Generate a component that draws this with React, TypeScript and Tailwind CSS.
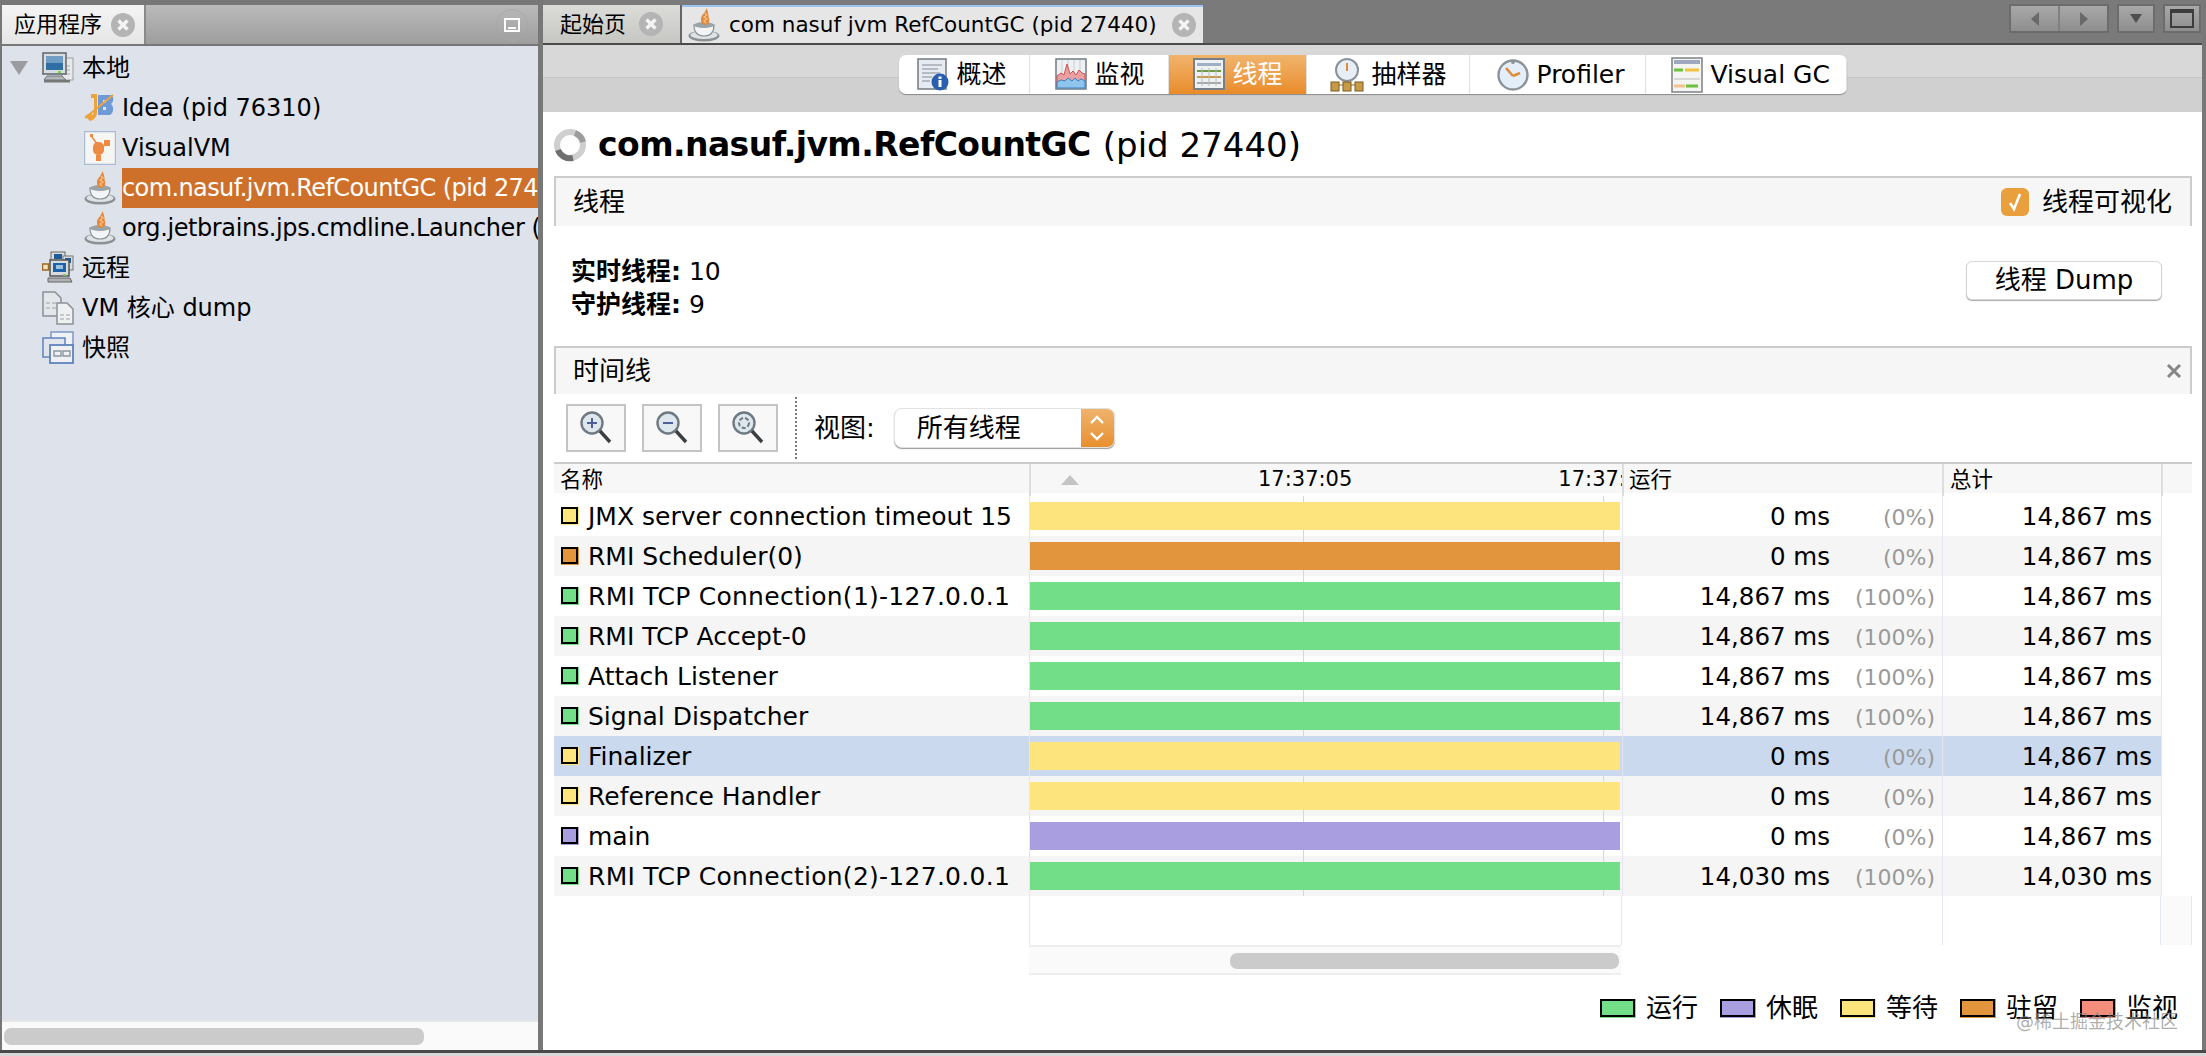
const threads = [
  { name: "JMX server connection timeout 15", color: "bg-[#fde47c]", run: "0 ms", pct: "(0%)", total: "14,867 ms", tracking: "" },
  { name: "RMI Scheduler(0)", color: "bg-[#e2953c]", run: "0 ms", pct: "(0%)", total: "14,867 ms", tracking: "" },
  { name: "RMI TCP Connection(1)-127.0.0.1", color: "bg-[#72df88]", run: "14,867 ms", pct: "(100%)", total: "14,867 ms", tracking: "tracking-[0.27px]" },
  { name: "RMI TCP Accept-0", color: "bg-[#72df88]", run: "14,867 ms", pct: "(100%)", total: "14,867 ms", tracking: "" },
  { name: "Attach Listener", color: "bg-[#72df88]", run: "14,867 ms", pct: "(100%)", total: "14,867 ms", tracking: "" },
  { name: "Signal Dispatcher", color: "bg-[#72df88]", run: "14,867 ms", pct: "(100%)", total: "14,867 ms", tracking: "" },
  { name: "Finalizer", color: "bg-[#fde47c]", run: "0 ms", pct: "(0%)", total: "14,867 ms", tracking: "" },
  { name: "Reference Handler", color: "bg-[#fde47c]", run: "0 ms", pct: "(0%)", total: "14,867 ms", tracking: "" },
  { name: "main", color: "bg-[#a99fe0]", run: "0 ms", pct: "(0%)", total: "14,867 ms", tracking: "" },
  { name: "RMI TCP Connection(2)-127.0.0.1", color: "bg-[#72df88]", run: "14,030 ms", pct: "(100%)", total: "14,030 ms", tracking: "tracking-[0.27px]" },
];

const legend = [
  { label: "运行", color: "bg-[#72df88]" },
  { label: "休眠", color: "bg-[#a99fe0]" },
  { label: "等待", color: "bg-[#fde47c]" },
  { label: "驻留", color: "bg-[#e2953c]" },
  { label: "监视", color: "bg-[#f48d7c]" },
];

function CloseDot() {
  return (
    <svg width="26" height="26" viewBox="0 0 26 26" className="shrink-0">
      <circle cx="13" cy="13" r="12" fill="#b4b4b4" />
      <path d="M8.5 8.5l9 9M17.5 8.5l-9 9" stroke="#f4f4f4" strokeWidth="3.4" />
    </svg>
  );
}

function JavaCup() {
  return (
    <svg width="32" height="36" viewBox="0 0 32 36" className="shrink-0">
      <ellipse cx="16" cy="29" rx="15.5" ry="5.5" fill="#8b9296" />
      <ellipse cx="16" cy="28" rx="13.5" ry="4" fill="#dfe3e6" />
      <path d="M6 18c0 8 4 11 10 11s10-3 10-11c-4 2-16 2-20 0z" fill="#f2f4f5" stroke="#8b949a" strokeWidth="1.2" />
      <ellipse cx="16" cy="18" rx="10" ry="3" fill="#9aa3a8" />
      <path d="M18 1c1 4-6 7-5 12 0 3 2 5 4 5 4-1 5-4 4-7-1-2 0-3-1-5 0-2-1-4-2-5z" fill="#e28a3c" />
      <path d="M17 6l2 2-3 2 3 2-3 2 2 2" stroke="#f7c08d" strokeWidth="1.2" fill="none" />
    </svg>
  );
}

function ComputerIcon() {
  return (
    <svg width="32" height="32" viewBox="0 0 32 32" className="shrink-0">
      <rect x="20" y="6" width="11" height="22" fill="#e6e8ea" stroke="#9aa0a5" />
      <path d="M23 14h5M23 18h5M23 22h5" stroke="#a8acb0" />
      <rect x="1" y="1" width="23" height="21" fill="#d9dcdf" stroke="#5e6469" strokeWidth="1.5" />
      <rect x="4" y="4" width="17" height="14" fill="#2f6fa3" />
      <rect x="4" y="4" width="17" height="7" fill="#6f9dc4" />
      <rect x="16" y="19" width="3" height="2" fill="#75d04a" />
      <path d="M5 24h15l4 4H2z" fill="#b4b8bb" stroke="#6e7478" />
      <rect x="2" y="28" width="26" height="2.5" fill="#777" />
    </svg>
  );
}

function RemoteIcon() {
  return (
    <svg width="32" height="34" viewBox="0 0 32 34" className="shrink-0">
      <rect x="9" y="1" width="14" height="10" fill="#d9dcdf" stroke="#666" />
      <rect x="12" y="3" width="8" height="5" fill="#1d5a99" />
      <rect x="21" y="5" width="10" height="14" fill="#d9dcdf" stroke="#777" />
      <rect x="23" y="7" width="6" height="5" fill="#1d5a99" />
      <rect x="0.5" y="13" width="6" height="6" fill="#f3e3bd" stroke="#9a6a2a" strokeWidth="1.5" />
      <rect x="8" y="9" width="19" height="16" fill="#d9dcdf" stroke="#555" strokeWidth="1.5" />
      <rect x="11" y="12" width="13" height="9" fill="#1d62a8" />
      <rect x="14" y="14" width="7" height="4" fill="#9cc0e0" />
      <path d="M6 27h22l2 4H6z" fill="#aeb2b5" stroke="#666" />
      <rect x="21" y="23" width="3" height="2" fill="#75d04a" />
    </svg>
  );
}

function DumpIcon() {
  return (
    <svg width="32" height="34" viewBox="0 0 32 34" className="shrink-0">
      <path d="M1 1h12l6 6v18H1z" fill="#e4e7ea" stroke="#8c9196" strokeWidth="1.5" />
      <path d="M4 12h4M10 12h4M4 17h4M10 17h4" stroke="#9da2a6" />
      <path d="M15 12h10l6 6v15H15z" fill="#eef0f2" stroke="#8c9196" strokeWidth="1.5" />
      <path d="M18 24h4M24 24h4M18 28h4M24 28h4" stroke="#9da2a6" />
    </svg>
  );
}

function SnapshotIcon() {
  return (
    <svg width="32" height="34" viewBox="0 0 32 34" className="shrink-0">
      <rect x="9" y="1" width="22" height="17" fill="#eef1f5" stroke="#7f97c2" strokeWidth="1.5" />
      <rect x="1" y="7" width="22" height="19" fill="#e2e6ec" stroke="#5f83bd" strokeWidth="1.5" />
      <rect x="8" y="14" width="23" height="18" fill="#eef0f3" stroke="#5f83bd" strokeWidth="1.8" />
      <path d="M12 20h7v5h-7zM21 20h7v5h-7z" fill="none" stroke="#8e959d" strokeWidth="1.4" />
    </svg>
  );
}

function IdeaIcon() {
  return (
    <svg width="32" height="32" viewBox="0 0 32 32" className="shrink-0">
      <path d="M14 3h13c3 1 3 7 0 9 3 2 3 9-1 11H14z" fill="#6f9ad8" />
      <path d="M19 8h3v3h-3zM19 15h3v3h-3z" fill="#dee2ea" />
      <path d="M7 2h6v18c0 5-3 8-7 9l-5-5 5-3 3 2 1-6V6H7z" fill="#eda33a" />
      <path d="M1 26L29 3" stroke="#eda33a" strokeWidth="2" />
    </svg>
  );
}

function VisualVmIcon() {
  return (
    <svg width="32" height="34" viewBox="0 0 32 34" className="shrink-0">
      <rect x="0.5" y="0.5" width="31" height="33" rx="1" fill="#f5f5f3" stroke="#a7bcd4" strokeWidth="1.4" />
      <rect x="9" y="11" width="11" height="13" rx="5" fill="#ee8a44" />
      <rect x="20" y="9" width="6" height="6" fill="#ee8a44" />
      <rect x="12" y="24" width="5" height="6" fill="#ee8a44" />
      <rect x="6" y="3" width="3" height="3" fill="#ee8a44" />
      <path d="M8 6l5 7M24 12l-7 5" stroke="#ee8a44" strokeWidth="1.5" />
    </svg>
  );
}

function OverviewIcon() {
  return (
    <svg width="32" height="33" viewBox="0 0 32 33" className="shrink-0">
      <rect x="1" y="1" width="28" height="30" fill="#e6ebf1" stroke="#7b8288" strokeWidth="1.6" />
      <path d="M5 7h20M5 11h16M5 15h18M5 19h10M5 23h8" stroke="#a5acb3" strokeWidth="1.3" />
      <circle cx="23" cy="24" r="8.5" fill="#2a5fb0" />
      <rect x="21.5" y="22" width="3" height="7" fill="#fff" />
      <rect x="21.5" y="18.5" width="3" height="2.4" fill="#fff" />
    </svg>
  );
}

function MonitorIcon() {
  return (
    <svg width="32" height="33" viewBox="0 0 32 33" className="shrink-0">
      <rect x="1" y="1" width="30" height="30" fill="#eef0f3" stroke="#7b8288" strokeWidth="1.6" />
      <path d="M7 2v28M13 2v28M19 2v28M25 2v28" stroke="#c9ced3" />
      <path d="M2 18l4-3 3 2 3-11 3 10 3-3 3 4 3-5 3 3 3 1v13H2z" fill="#eba1a1" stroke="#cf5050" />
      <path d="M2 24l4-2 4 1 3-3 4 3 3-3 3 3 3-2 4 2v7H2z" fill="#8fc4ec" stroke="#3a83c4" />
    </svg>
  );
}

function ThreadsIcon() {
  return (
    <svg width="32" height="33" viewBox="0 0 32 33" className="shrink-0">
      <rect x="1" y="1" width="30" height="30" fill="#eef1f2" stroke="#77808a" strokeWidth="2" />
      <rect x="4" y="5" width="24" height="3" fill="#9fb0c6" />
      <path d="M4 13h24" stroke="#6f9a44" strokeWidth="2" />
      <path d="M4 19h24" stroke="#c79a4a" strokeWidth="2" />
      <path d="M4 25h24" stroke="#a8a8a8" strokeWidth="2" />
      <path d="M9 10v18M16 10v18M23 10v18" stroke="#b8bcc0" />
    </svg>
  );
}

function SamplerIcon() {
  return (
    <svg width="34" height="34" viewBox="0 0 34 34" className="shrink-0">
      <circle cx="17" cy="12" r="11" fill="#e8eef5" stroke="#8a9199" strokeWidth="2" />
      <path d="M17 5v8" stroke="#e08a3c" strokeWidth="2" />
      <path d="M2 27h30" stroke="#8a6a2c" />
      <rect x="1" y="24" width="8" height="9" fill="#c99a45" stroke="#7a5a20" />
      <rect x="13" y="24" width="8" height="9" fill="#c99a45" stroke="#7a5a20" />
      <rect x="25" y="24" width="8" height="9" fill="#c99a45" stroke="#7a5a20" />
    </svg>
  );
}

function ProfilerIcon() {
  return (
    <svg width="32" height="34" viewBox="0 0 32 34" className="shrink-0">
      <circle cx="16" cy="17" r="14.5" fill="#e4eef8" stroke="#8b9298" strokeWidth="2.4" />
      <path d="M16 18l-7-8M16 18l7-3" stroke="#e08a3c" strokeWidth="2.6" />
      <circle cx="16" cy="4" r="2" fill="#8b9298" />
    </svg>
  );
}

function VisualGcIcon() {
  return (
    <svg width="32" height="36" viewBox="0 0 32 36" className="shrink-0">
      <rect x="1" y="1" width="30" height="34" fill="#f4f5f2" stroke="#85898d" strokeWidth="1.6" />
      <rect x="3" y="3" width="26" height="4" fill="#9fa8c0" />
      <path d="M3 13h9" stroke="#6cc23d" strokeWidth="3" />
      <path d="M14 13h14" stroke="#f0c442" strokeWidth="3" />
      <path d="M3 22h26" stroke="#d6d8d4" strokeWidth="2" />
      <path d="M3 29h11" stroke="#f2c28f" strokeWidth="3" />
      <path d="M15 29h12" stroke="#6cc23d" strokeWidth="3" />
    </svg>
  );
}

function Magnifier({ kind }: { kind: "plus" | "minus" | "fit" }) {
  return (
    <svg width="34" height="36" viewBox="0 0 34 36">
      <circle cx="13" cy="13" r="10.5" fill="#dfe7ee" stroke="#6e7a82" strokeWidth="2.4" />
      <path d="M21 21l10 11" stroke="#3b3f42" strokeWidth="3.4" />
      {kind === "plus" && <path d="M8 13h10M13 8v10" stroke="#4e5f9c" strokeWidth="2" />}
      {kind === "minus" && <path d="M8 13h10" stroke="#4e5f9c" strokeWidth="2" />}
      {kind === "fit" && <circle cx="13" cy="13" r="5" fill="none" stroke="#6e7a82" strokeWidth="2" strokeDasharray="4 2" />}
    </svg>
  );
}

function Swatch({ color, big }: { color: string; big?: boolean }) {
  return (
    <span className={`relative block shrink-0 ${color} ${big ? "w-[36px] h-[19px]" : "w-[18px] h-[18px]"}`}>
      <span className={`absolute left-0 top-0 border-2 border-black ${big ? "w-[35px] h-[18px]" : "w-[17px] h-[17px]"}`} />
    </span>
  );
}

function NavButton({ className, children }: { className: string; children: React.ReactNode }) {
  return (
    <div className={`h-[29px] flex items-center justify-center border-2 border-[#6c6c6c] bg-gradient-to-b from-[#a8a8a8] to-[#8e8e8e] ${className}`}>
      {children}
    </div>
  );
}

const segments = [
  { label: "概述", icon: <OverviewIcon />, w: "w-[131px] pl-[18px]", active: false },
  { label: "监视", icon: <MonitorIcon />, w: "w-[139px] pl-[25px]", active: false },
  { label: "线程", icon: <ThreadsIcon />, w: "w-[138px] pl-[24px]", active: true },
  { label: "抽样器", icon: <SamplerIcon />, w: "w-[163px] pl-[23px]", active: false },
  { label: "Profiler", icon: <ProfilerIcon />, w: "w-[176px] pl-[27px]", active: false },
  { label: "Visual GC", icon: <VisualGcIcon />, w: "w-[201px] pl-[25px]", active: false },
];

function TreeRow({ icon, label, selected, tracking = "" }: { icon: React.ReactNode; label: string; selected?: boolean; tracking?: string }) {
  return (
    <div className="h-10 flex items-center pl-[82px]">
      <span className="w-[38px] pr-[6px] flex justify-end shrink-0">{icon}</span>
      <span
        className={`h-10 flex-1 min-w-0 flex items-center whitespace-nowrap overflow-hidden ${tracking} ${
          selected ? "bg-[#cf702a] text-white" : "text-black"
        }`}
      >
        {label}
      </span>
    </div>
  );
}

export default function App() {
  return (
    <div className="w-[2206px] h-[1056px] overflow-hidden flex flex-col bg-[#777777] text-black font-['DejaVu_Sans','Noto_Sans_CJK_SC',sans-serif]">
      <div className="h-[1050px] flex pl-[2px] pr-[4px]">
        {/* left: applications tree */}
        <div className="w-[536px] flex flex-col pt-[5px]">
          <div className="h-[41px] flex items-stretch bg-gradient-to-b from-[#bababa] to-[#9e9e9e] border-b-2 border-[#777777]">
            <div className="w-[144px] bg-gradient-to-b from-[#f4f4f4] to-[#e6e6e6] flex items-center pl-[12px] gap-[8px] border-r-2 border-[#8a8a8a] text-[22px]">
              <span>应用程序</span>
              <CloseDot />
            </div>
            <div className="flex-1 flex items-center justify-end pr-[10px]">
              <div className="w-[32px] h-[32px] rounded-full border border-[#a8a8a8] flex items-center justify-center">
                <div className="w-[16px] h-[14px] border-2 border-white flex items-end justify-center pb-[1px]">
                  <div className="w-[8px] h-[2px] bg-white" />
                </div>
              </div>
            </div>
          </div>
          <div className="flex-1 bg-[#dee2ea] pt-[2px] text-[24px]">
            <div className="h-10 flex items-center pl-[7px]">
              <svg width="20" height="16" viewBox="0 0 20 16" className="mr-[13px] shrink-0">
                <path d="M1 1h18l-9 14z" fill="#9a9ca0" />
              </svg>
              <ComputerIcon />
              <span className="ml-[8px]">本地</span>
            </div>
            <TreeRow icon={<IdeaIcon />} label="Idea (pid 76310)" />
            <TreeRow icon={<VisualVmIcon />} label="VisualVM" />
            <TreeRow icon={<JavaCup />} label="com.nasuf.jvm.RefCountGC (pid 27440)" selected tracking="tracking-[-0.6px]" />
            <TreeRow icon={<JavaCup />} label="org.jetbrains.jps.cmdline.Launcher (pid 76311)" tracking="tracking-[-0.4px]" />
            <div className="h-10 flex items-center pl-[40px] gap-[8px]">
              <RemoteIcon />
              <span>远程</span>
            </div>
            <div className="h-10 flex items-center pl-[40px] gap-[8px]">
              <DumpIcon />
              <span>VM 核心 dump</span>
            </div>
            <div className="h-10 flex items-center pl-[40px] gap-[8px]">
              <SnapshotIcon />
              <span>快照</span>
            </div>
          </div>
          <div className="h-[30px] bg-[#fafafa] border-t-2 border-[#e6e6e6] pt-[6px] pl-[2px]">
            <div className="w-[420px] h-[17px] rounded-[7px] bg-[#cbcbcb]" />
          </div>
        </div>

        <div className="w-[5px] shrink-0" />

        {/* right: application view */}
        <div className="flex-1 min-w-0 flex flex-col">
          <div className="h-[45px] pt-[5px] flex border-b-2 border-[#4a4a4a] bg-[#7a7a7a]">
            <div className="w-[139px] h-[38px] flex items-center pl-[17px] gap-[12px] border-r-2 border-[#666] bg-gradient-to-b from-[#dcdcd8] to-[#c6c6c2] text-[22px]">
              <span>起始页</span>
              <CloseDot />
            </div>
            <div className="w-[521px] h-[38px] flex flex-col">
              <div className="h-[3px] bg-[#9dc3f2]" />
              <div className="flex-1 flex items-center pl-[6px] bg-[#e6e6e6] text-[21.5px] whitespace-nowrap">
                <JavaCup />
                <span className="ml-[9px]">com nasuf jvm RefCountGC (pid 27440)</span>
                <span className="ml-[14px]">
                  <CloseDot />
                </span>
              </div>
            </div>
            <div className="flex-1 flex justify-end gap-[8px] pr-[1px] -mt-[1px]">
              <NavButton className="w-[100px] gap-0">
                <span className="flex-1 h-full flex items-center justify-center border-r-2 border-[#808080]">
                  <svg width="10" height="14" viewBox="0 0 10 14"><path d="M9 0v14L1 7z" fill="#696969" /></svg>
                </span>
                <span className="flex-1 h-full flex items-center justify-center">
                  <svg width="10" height="14" viewBox="0 0 10 14"><path d="M1 0v14l8-7z" fill="#696969" /></svg>
                </span>
              </NavButton>
              <NavButton className="w-[38px]">
                <svg width="12" height="9" viewBox="0 0 12 9"><path d="M0 0h12L6 9z" fill="#4f4f4f" /></svg>
              </NavButton>
              <NavButton className="w-[38px]">
                <div className="w-[24px] h-[19px] border-2 border-t-[4px] border-[#3c3c3c]" />
              </NavButton>
            </div>
          </div>

          <div className="relative h-[67px] bg-[#d0d0d0] pt-[10px] flex justify-center">
            <div className="absolute left-0 right-0 top-0 h-[33px] bg-[#d8d8d8] border-b border-[#c6c6c6]" />
            <div className="relative h-[39px] flex rounded-[7px] overflow-hidden bg-white shadow-[0_1px_1px_#8a8a8a] text-[25px]">
              {segments.map((s) => (
                <div
                  key={s.label}
                  className={`${s.w} flex items-center gap-[8px] border-r border-[#e0e0e0] whitespace-nowrap ${
                    s.active ? "bg-gradient-to-b from-[#f0b46b] to-[#e98c26] text-white" : "text-black"
                  }`}
                >
                  {s.icon}
                  <span>{s.label}</span>
                </div>
              ))}
            </div>
          </div>

          <div className="relative flex-1 bg-white">
            <div className="h-[64px] flex items-center pl-[10px] pt-[2px]">
              <svg width="34" height="34" viewBox="0 0 34 34" className="shrink-0">
                <circle cx="17" cy="17" r="13" fill="none" stroke="#cfcfcf" strokeWidth="6" />
                <path d="M5 22a13 13 0 0 0 15 8" fill="none" stroke="#6f6f6f" strokeWidth="6" />
                <path d="M22 5a13 13 0 0 1 8 9" fill="none" stroke="#9c9c9c" strokeWidth="6" />
              </svg>
              <span className="ml-[11px] text-[33px] font-bold tracking-[-0.55px] whitespace-nowrap">com.nasuf.jvm.RefCountGC</span>
              <span className="ml-[12px] text-[34px] whitespace-nowrap">(pid 27440)</span>
            </div>

            <div className="ml-[11px] w-[1638px] h-[50px] flex items-center justify-between pl-[17px] pr-[18px] bg-[#f6f6f6] border-t-2 border-x-2 border-[#cccccc] text-[26px]">
              <span>线程</span>
              <div className="flex items-center gap-[13px]">
                <div className="w-[28px] h-[28px] rounded-[6px] bg-[#e9a03c] flex items-center justify-center">
                  <svg width="16" height="20" viewBox="0 0 16 20"><path d="M3 11l4 6 6-15" fill="none" stroke="#fff" strokeWidth="2.6" /></svg>
                </div>
                <span>线程可视化</span>
              </div>
            </div>

            <div className="ml-[11px] w-[1638px] h-[120px] flex justify-between pl-[17px] pr-[30px]">
              <div className="pt-[29px] text-[25px] leading-[33px]">
                <div><b>实时线程:</b> 10</div>
                <div><b>守护线程:</b> 9</div>
              </div>
              <div className="mt-[35px] w-[196px] h-[39px] rounded-[6px] border border-[#d6d6d6] bg-white shadow-[0_1px_1px_#aaaaaa] flex items-center justify-center text-[26px]">
                线程 Dump
              </div>
            </div>

            <div className="ml-[11px] w-[1638px] h-[48px] flex items-center justify-between pl-[17px] pr-[8px] bg-[#f6f6f6] border-t-2 border-x-2 border-[#cccccc] text-[26px]">
              <span>时间线</span>
              <svg width="16" height="16" viewBox="0 0 16 16"><path d="M2 2l12 12M14 2L2 14" stroke="#868686" strokeWidth="3" /></svg>
            </div>

            <div className="ml-[11px] w-[1638px] h-[68px] flex items-center pl-[12px] text-[26px]">
              <div className="flex gap-[16px]">
                {(["plus", "minus", "fit"] as const).map((k) => (
                  <div key={k} className="w-[60px] h-[48px] border-2 border-[#c4c4c4] bg-[#f8f8f8] flex items-center justify-center">
                    <Magnifier kind={k} />
                  </div>
                ))}
              </div>
              <div className="ml-[17px] h-[62px] border-l-2 border-dotted border-[#777777]" />
              <span className="ml-[17px]">视图:</span>
              <div className="ml-[19px] w-[221px] h-[40px] rounded-[8px] overflow-hidden bg-white shadow-[0_1px_1px_#999999] border border-[#e2e2e2] flex">
                <span className="flex-1 pl-[22px] flex items-center">所有线程</span>
                <span className="w-[33px] bg-gradient-to-b from-[#eeb36b] to-[#e88f2a] flex items-center justify-center">
                  <svg width="16" height="30" viewBox="0 0 16 30">
                    <path d="M2 10l6-6 6 6M2 20l6 6 6-6" fill="none" stroke="#fff" strokeWidth="2.4" />
                  </svg>
                </span>
              </div>
            </div>

            {/* thread table */}
            <div className="ml-[11px] w-[1638px] border-t-2 border-[#cccccc]">
              <div className="grid grid-cols-[475px_593px_320px_219px_31px] h-[29px] bg-[#f7f7f7] text-[21.5px]">
                <div className="pl-[6px] flex items-center">名称</div>
                <div className="flex items-center overflow-hidden whitespace-nowrap border-l-2 border-[#dddddd] text-[21px]">
                  <svg width="18" height="10" viewBox="0 0 18 10" className="ml-[30px] shrink-0"><path d="M9 0l9 10H0z" fill="#c4c4c4" /></svg>
                  <span className="ml-[179px]">17:37:05</span>
                  <span className="ml-[206px]">17:37:10</span>
                </div>
                <div className="pl-[5px] flex items-center border-l-2 border-[#dddddd]">运行</div>
                <div className="pl-[6px] flex items-center border-l-2 border-[#dddddd]">总计</div>
                <div className="border-l-2 border-[#dddddd]" />
              </div>
              <div className="h-[3px]" />
              {threads.map((t, i) => {
                const selected = t.name === "Finalizer";
                const bg = selected ? "bg-[#cad9ee]" : i % 2 === 1 ? "bg-[#f5f5f5]" : "bg-white";
                return (
                  <div key={t.name} className={`grid grid-cols-[475px_593px_320px_219px_31px] h-10 text-[24.5px] ${bg}`}>
                    <div className="flex items-center pl-[7px] gap-[9px] whitespace-nowrap overflow-hidden text-[25px]">
                      <Swatch color={t.color} />
                      <span className={`pt-[2px] ${t.tracking}`}>{t.name}</span>
                    </div>
                    <div className="relative border-l border-[#e2e7f2] pt-[6px] pr-[2px]">
                      <div className="absolute left-[273px] top-0 bottom-0 w-px bg-[#d8d8d8]" />
                      <div className="absolute left-[573px] top-0 bottom-0 w-px bg-[#d8d8d8]" />
                      <div className={`relative h-[28px] ${t.color}`} />
                    </div>
                    <div className="flex items-center pt-[2px] border-l border-[#e2e7f2] whitespace-nowrap">
                      <span className="w-[207px] text-right">{t.run}</span>
                      <span className="w-[105px] text-right text-[#999999] text-[22px]">{t.pct}</span>
                    </div>
                    <div className="flex items-center justify-end pt-[2px] pr-[9px] border-l border-[#e2e7f2]">{t.total}</div>
                    <div className="bg-white border-l border-[#e2e7f2]" />
                  </div>
                );
              })}
              <div className="grid grid-cols-[475px_593px_320px_219px_31px] h-[49px]">
                <div />
                <div className="border-x border-[#e2e7f2]" />
                <div />
                <div className="border-x border-[#e2e7f2]" />
                <div className="bg-[#fafafa] border-r border-[#e2e7f2]" />
              </div>
            </div>

            <div className="ml-[486px] w-[592px] h-[30px] bg-[#fafafa] border-y-2 border-[#eeeeee] pt-[6px] flex justify-end pr-[2px]">
              <div className="w-[389px] h-[16px] rounded-[7px] bg-[#cbcbcb]" />
            </div>

            <div className="mt-[23px] flex justify-end items-center gap-[22px] pr-[24px] text-[26px]">
              {legend.map((l) => (
                <div key={l.label} className="flex items-center gap-[10px]">
                  <Swatch color={l.color} big />
                  <span className="leading-[20px]">{l.label}</span>
                </div>
              ))}
            </div>

            <span className="absolute right-[24px] bottom-[17px] text-[18px] leading-[22px] text-[#8a8a8a]/70 whitespace-nowrap">
              @稀土掘金技术社区
            </span>
          </div>
        </div>
      </div>
      <div className="h-[6px] border-t-[3px] border-[#4a4a4a] bg-[#d8d8d8]" />
    </div>
  );
}
